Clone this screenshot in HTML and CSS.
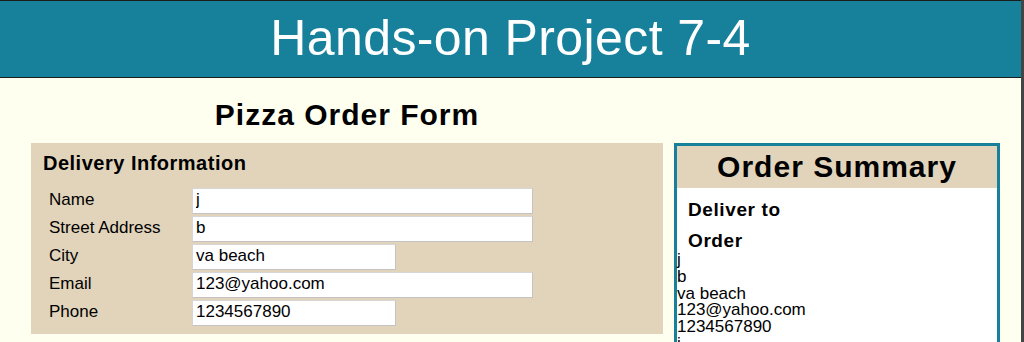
FILE: index.html
```html
<!DOCTYPE html>
<html lang="en">
<head>
<meta charset="utf-8">
<title>Hands-on Project 7-4</title>
<link rel="stylesheet" href="styles.css">
</head>
<body>
<div class="page">
  <header class="site-header">
    <h1>Hands-on Project 7-4</h1>
  </header>
  <main class="layout">
    <h2 class="form-title">Pizza Order Form</h2>
    <form class="delivery">
      <div class="legend">Delivery Information</div>
      <div class="fields">
        <label class="field-label" for="name">Name</label>
        <input class="field long" id="name" type="text" value="j">
        <label class="field-label" for="street">Street Address</label>
        <input class="field long" id="street" type="text" value="b">
        <label class="field-label" for="city">City</label>
        <input class="field short" id="city" type="text" value="va beach">
        <label class="field-label" for="email">Email</label>
        <input class="field long" id="email" type="text" value="123@yahoo.com">
        <label class="field-label" for="phone">Phone</label>
        <input class="field short" id="phone" type="text" value="1234567890">
      </div>
    </form>
    <aside class="summary">
      <h2 class="summary-title">Order Summary</h2>
      <div class="summary-body">
        <h3 class="summary-head">Deliver to</h3>
        <h3 class="summary-head">Order</h3>
        <div class="summary-lines">
          <div>j</div>
          <div>b</div>
          <div>va beach</div>
          <div>123@yahoo.com</div>
          <div>1234567890</div>
          <div>i</div>
        </div>
      </div>
    </aside>
  </main>
</div>
</body>
</html>
```

FILE: styles.css
```css
html, body {
  margin: 0;
  padding: 0;
  height: 100%;
  overflow: hidden;
}

body {
  background: #fffff0;
  font-family: "Liberation Sans", Arial, sans-serif;
  color: #000;
}

.page {
  min-height: 100vh;
  box-sizing: border-box;
  border-right: 3px solid #444;
  background: #fffff0;
}

.site-header {
  background: #17819c;
  border-top: 1px solid #1c1c1c;
  border-bottom: 1px solid #1c1c1c;
  padding: 8px 0 10px;
}

.site-header h1 {
  margin: 0;
  font-size: 50px;
  line-height: 58px;
  font-weight: normal;
  letter-spacing: 0.4px;
  color: #fff;
  text-align: center;
}

.layout {
  display: grid;
  grid-template-columns: 632px 326px;
  column-gap: 11px;
  padding-left: 31px;
  align-items: start;
}

.form-title {
  grid-column: 1;
  grid-row: 1;
  margin: 19px 0 10px;
  font-size: 30px;
  line-height: 36px;
  letter-spacing: 1px;
  text-align: center;
}

.delivery {
  grid-column: 1;
  grid-row: 2;
  background: #e1d4bb;
  padding: 8px 12px 7px;
  margin: 0;
}

.legend {
  font-size: 20px;
  line-height: 24px;
  font-weight: bold;
  letter-spacing: 0.5px;
  margin-bottom: 12px;
}

.fields {
  display: grid;
  grid-template-columns: 143px 1fr;
  grid-auto-rows: 28px;
  margin-left: 6px;
  align-items: start;
}

.field-label {
  font-size: 17px;
  line-height: 20px;
  padding-top: 3px;
}

.field {
  box-sizing: border-box;
  height: 26px;
  margin-top: 1px;
  padding: 0 3px 2px;
  font-family: "Liberation Sans", Arial, sans-serif;
  font-size: 17px;
  color: #000;
  background: #fff;
  border: 1px solid;
  border-color: #d6d6d6 #c3c3c3 #c3c3c3 #d6d6d6;
  border-radius: 0;
  outline: none;
}

.field.long {
  width: 341px;
}

.field.short {
  width: 204px;
}

.summary {
  grid-column: 2;
  grid-row: 2;
  border: 3px solid #17819c;
  background: #fff;
  min-height: 260px;
}

.summary-title {
  margin: 0;
  background: #e1d4bb;
  font-size: 30px;
  line-height: 42px;
  letter-spacing: 1px;
  text-align: center;
}

.summary-body {
  padding-top: 2px;
}

.summary-head {
  margin: 9px 0 0;
  padding-left: 11px;
  font-size: 19px;
  line-height: 22px;
  letter-spacing: 0.6px;
}

.summary-lines {
  font-size: 17px;
  line-height: 16.75px;
}
```
